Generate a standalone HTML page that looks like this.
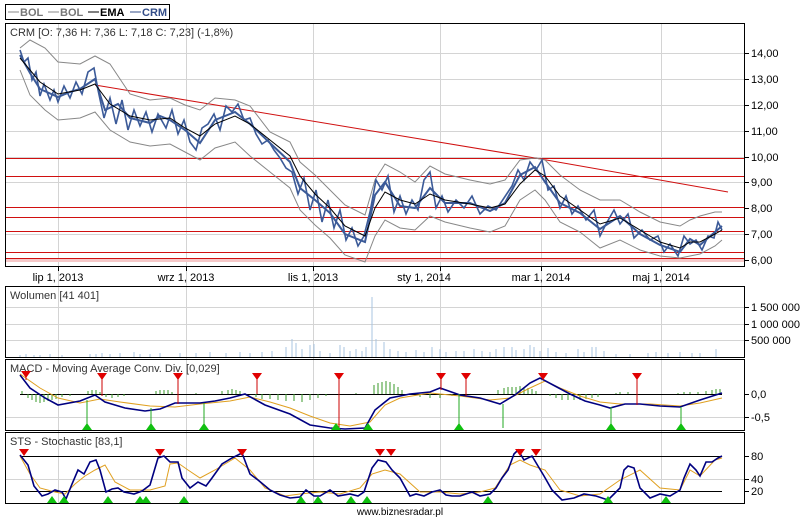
<!DOCTYPE html>
<html><head><meta charset="utf-8"><style>
html,body{margin:0;padding:0;background:#fff;width:800px;height:520px;overflow:hidden}
svg{display:block;font-family:"Liberation Sans",sans-serif}
</style></head><body>
<svg width="800" height="520" viewBox="0 0 800 520" xmlns="http://www.w3.org/2000/svg">
<rect x="5.5" y="4.5" width="164" height="15" fill="#fff" stroke="#000"/>
<g font-size="11" font-weight="bold">
<line x1="8" y1="12" x2="19" y2="12" stroke="#888"/><text x="20" y="16" fill="#777">BOL</text>
<line x1="48" y1="12" x2="59" y2="12" stroke="#888"/><text x="60" y="16" fill="#777">BOL</text>
<line x1="88" y1="12" x2="99" y2="12" stroke="#000"/><text x="100" y="16" fill="#000">EMA</text>
<line x1="130" y1="12" x2="141" y2="12" stroke="#334d88"/><text x="142" y="16" fill="#334d88">CRM</text>
</g>
<g stroke="#d4d4d4" stroke-width="1">
<line x1="58.5" y1="24" x2="58.5" y2="503"/><line x1="186.5" y1="24" x2="186.5" y2="503"/>
<line x1="313.5" y1="24" x2="313.5" y2="503"/><line x1="440.5" y1="24" x2="440.5" y2="503"/>
<line x1="541.5" y1="24" x2="541.5" y2="503"/><line x1="661.5" y1="24" x2="661.5" y2="503"/>
<line x1="6" y1="53.5" x2="744" y2="53.5"/><line x1="6" y1="79.5" x2="744" y2="79.5"/>
<line x1="6" y1="105.5" x2="744" y2="105.5"/><line x1="6" y1="131.5" x2="744" y2="131.5"/>
<line x1="6" y1="157.5" x2="744" y2="157.5"/><line x1="6" y1="182.5" x2="744" y2="182.5"/>
<line x1="6" y1="234.5" x2="744" y2="234.5"/>
<line x1="6" y1="307.5" x2="744" y2="307.5"/><line x1="6" y1="324.5" x2="744" y2="324.5"/><line x1="6" y1="340.5" x2="744" y2="340.5"/>
<line x1="6" y1="417.5" x2="744" y2="417.5"/><line x1="6" y1="479.5" x2="744" y2="479.5"/>
</g>
<g fill="none" stroke="#000">
<rect x="5.5" y="23.5" width="739" height="243"/>
<rect x="5.5" y="286.5" width="739" height="71"/>
<rect x="5.5" y="359.5" width="739" height="71"/>
<rect x="5.5" y="432.5" width="739" height="71"/>
</g>
<g font-size="11" fill="#000">
<g stroke="#000"><line x1="744" y1="53.5" x2="749" y2="53.5"/><line x1="744" y1="79.5" x2="749" y2="79.5"/><line x1="744" y1="105.5" x2="749" y2="105.5"/><line x1="744" y1="131.5" x2="749" y2="131.5"/><line x1="744" y1="157.5" x2="749" y2="157.5"/><line x1="744" y1="182.5" x2="749" y2="182.5"/><line x1="744" y1="208.5" x2="749" y2="208.5"/><line x1="744" y1="234.5" x2="749" y2="234.5"/><line x1="744" y1="260.5" x2="749" y2="260.5"/>
<line x1="744" y1="307.5" x2="749" y2="307.5"/><line x1="744" y1="324.5" x2="749" y2="324.5"/><line x1="744" y1="340.5" x2="749" y2="340.5"/>
<line x1="744" y1="394.5" x2="749" y2="394.5"/><line x1="744" y1="417.5" x2="749" y2="417.5"/>
<line x1="744" y1="456.5" x2="749" y2="456.5"/><line x1="744" y1="479.5" x2="749" y2="479.5"/><line x1="744" y1="491.5" x2="749" y2="491.5"/></g>
<text x="751" y="57">14,00</text><text x="751" y="83">13,00</text><text x="751" y="109">12,00</text><text x="751" y="135">11,00</text><text x="751" y="161">10,00</text><text x="751" y="186">9,00</text><text x="751" y="212">8,00</text><text x="751" y="238">7,00</text><text x="751" y="264">6,00</text>
<text x="751" y="311">1 500 000</text><text x="751" y="328">1 000 000</text><text x="751" y="344">500 000</text>
<text x="751" y="398">0,0</text><text x="751" y="421">-0,5</text>
<text x="751" y="460">80</text><text x="751" y="483">40</text><text x="751" y="495">20</text>
</g>
<g font-size="11" text-anchor="middle">
<g stroke="#000"><line x1="58.5" y1="266" x2="58.5" y2="271"/><line x1="186.5" y1="266" x2="186.5" y2="271"/><line x1="313.5" y1="266" x2="313.5" y2="271"/><line x1="440.5" y1="266" x2="440.5" y2="271"/><line x1="541.5" y1="266" x2="541.5" y2="271"/><line x1="661.5" y1="266" x2="661.5" y2="271"/></g>
<text x="58" y="281">lip 1, 2013</text><text x="186" y="281">wrz 1, 2013</text><text x="313" y="281">lis 1, 2013</text><text x="424" y="281">sty 1, 2014</text><text x="541" y="281">mar 1, 2014</text><text x="661" y="281">maj 1, 2014</text>
</g>
<g font-size="11" fill="#333">
<text x="10" y="36">CRM [O: 7,36  H: 7,36  L: 7,18  C: 7,23] (-1,8%)</text>
<text x="10" y="299">Wolumen [41 401]</text>
<text x="10" y="372">MACD - Moving Average Conv. Div. [0,029]</text>
<text x="10" y="445">STS - Stochastic [83,1]</text>
</g>
<rect x="6" y="259" width="738" height="3" fill="#f6c8c8"/>
<g stroke="#d01010" stroke-width="1">
<line x1="6" y1="158.5" x2="744" y2="158.5"/><line x1="6" y1="176.5" x2="744" y2="176.5"/>
<line x1="6" y1="207.5" x2="744" y2="207.5"/><line x1="6" y1="217.5" x2="744" y2="217.5"/>
<line x1="6" y1="231.5" x2="744" y2="231.5"/><line x1="6" y1="252.5" x2="744" y2="252.5"/>
<line x1="6" y1="258.5" x2="744" y2="258.5"/>
<line x1="95" y1="85" x2="535" y2="158"/><line x1="535" y1="158" x2="728" y2="192"/>
</g>
<g fill="none" stroke="#888" stroke-width="1">
<polyline points="20,48 30,40 45,48 58,62 80,64 95,56 110,64 130,94 150,100 170,98 185,105 200,110 215,98 235,100 250,106 270,132 290,142 300,162 315,175 330,190 345,205 365,215 375,180 385,164 400,172 415,182 430,166 445,174 470,180 490,184 505,180 520,160 535,158 545,160 560,175 580,190 600,200 620,200 640,212 660,222 680,226 690,220 700,216 715,212 722,212"/>
<polyline points="20,70 30,95 45,110 58,120 80,118 95,112 110,130 130,142 150,146 170,144 185,152 200,160 215,148 235,142 250,156 270,172 290,188 300,210 315,225 330,238 345,255 365,262 375,236 385,220 400,228 415,230 430,216 445,222 470,228 490,232 505,226 520,200 535,190 545,200 560,222 580,232 600,248 620,240 640,250 660,256 680,258 690,256 700,254 715,246 722,240"/>
</g>
<polyline fill="none" stroke="#3b5a98" stroke-width="2" points="20,55 30,73 40,89 58,97 70,92 80,89 95,79 105,110 118,104 130,118 150,123 160,116 170,120 185,130 200,143 215,120 235,112 250,124 270,143 290,162 300,188 315,200 330,213 345,234 365,242 375,195 385,182 400,206 415,208 430,188 445,203 470,203 490,211 505,203 520,175 535,167 545,182 560,203 580,213 600,229 620,216 640,234 660,245 680,252 690,239 700,245 715,232 722,226"/>
<polyline fill="none" stroke="#3b5a98" stroke-width="1.6" points="20,50 24,62 28,58 32,80 36,72 40,96 44,84 50,100 54,90 58,102 64,86 70,98 76,82 82,94 88,72 94,68 98,90 104,118 110,98 116,124 122,100 128,130 134,110 140,126 146,112 152,132 158,114 166,128 172,110 178,134 184,120 190,142 196,150 202,128 208,124 214,114 220,130 226,106 232,112 238,104 244,120 250,118 256,134 262,144 268,140 274,150 280,158 286,168 292,172 298,194 304,178 310,210 316,190 322,222 328,200 334,228 340,210 346,240 352,228 358,246 364,236 370,212 376,180 382,190 388,176 394,212 400,196 406,214 412,200 418,210 424,180 430,172 436,208 442,196 448,212 456,200 464,208 472,196 480,214 488,206 496,210 504,198 512,186 518,170 524,180 530,162 536,170 542,160 548,190 554,186 560,208 566,196 572,214 578,206 586,220 594,210 600,236 606,224 614,210 620,224 628,214 634,238 642,230 650,240 658,236 664,252 670,244 678,256 684,236 690,244 696,240 702,250 708,236 714,238 718,222 722,230"/>
<polyline fill="none" stroke="#000" stroke-width="1" points="20,58 40,82 58,94 80,90 95,84 110,104 130,116 150,120 170,118 185,128 200,136 215,124 235,116 250,124 270,140 290,156 300,176 315,194 330,208 345,226 365,236 375,208 385,192 400,200 415,204 430,194 445,200 470,204 490,208 505,204 520,184 535,170 545,176 560,196 580,210 600,224 620,218 640,230 660,242 680,248 690,242 700,242 715,234 722,230"/>
<path stroke="#a8c4e0" stroke-width="1" d="M20 357v-2M26 357v-3M34 357v-2M40 357v-2M50 357v-3M62 357v-2M90 357v-3M96 357v-3M102 357v-4M110 357v-3M120 357v-4M134 357v-5M140 357v-3M150 357v-3M160 357v-4M180 357v-4M196 357v-4M210 357v-5M226 357v-4M240 357v-5M250 357v-4M262 357v-5M272 357v-6M286 357v-10M292 357v-18M296 357v-14M302 357v-8M310 357v-12M314 357v-13M320 357v-6M330 357v-4M340 357v-12M344 357v-10M350 357v-6M356 357v-8M362 357v-6M366 357v-10M372 357v-60M376 357v-18M384 357v-15M390 357v-8M398 357v-6M406 357v-5M416 357v-7M424 357v-5M432 357v-10M440 357v-8M446 357v-5M456 357v-6M464 357v-6M474 357v-8M482 357v-6M490 357v-5M496 357v-8M504 357v-10M512 357v-10M516 357v-7M524 357v-8M530 357v-12M534 357v-10M540 357v-6M548 357v-9M556 357v-5M566 357v-4M578 357v-8M584 357v-5M592 357v-10M596 357v-10M604 357v-6M616 357v-3M630 357v-3M648 357v-4M656 357v-5M668 357v-4M680 357v-5M692 357v-4M700 357v-4M716 357v-8"/>
<line x1="20" y1="394.5" x2="722" y2="394.5" stroke="#000"/>
<path stroke="#3a9a2a" stroke-width="1" d="M22 394v-3M28 394v4M32 394v6M36 394v8M40 394v9M44 394v8M48 394v7M52 394v6M56 394v5M62 394v3M70 394v2M88 394v-3M92 394v-4M96 394v-4M100 394v-2M106 394v3M112 394v4M118 394v3M124 394v2M156 394v-3M160 394v-4M164 394v-4M168 394v-4M172 394v-2M196 394v-1M222 394v-3M228 394v-4M232 394v-5M236 394v-4M240 394v-3M256 394v3M262 394v5M270 394v5M278 394v6M286 394v7M294 394v7M302 394v8M310 394v6M318 394v4M326 394v2M356 394v-1M374 394v-9M378 394v-11M382 394v-12M386 394v-13M390 394v-12M394 394v-10M398 394v-7M402 394v-4M420 394v3M430 394v4M440 394v4M452 394v2M498 394v-4M504 394v-6M508 394v-7M512 394v-7M516 394v-7M520 394v-8M524 394v-7M528 394v-6M532 394v-5M536 394v-3M550 394v2M556 394v4M562 394v6M568 394v6M574 394v6M580 394v6M586 394v5M592 394v4M598 394v3M616 394v-1M620 394v-2M628 394v-2M678 394v-1M684 394v-2M690 394v-2M698 394v-2M706 394v-3M712 394v-4M716 394v-5M720 394v-5"/>
<polyline fill="none" stroke="#e0a020" stroke-width="1" points="20,374 40,388 58,398 80,403 100,399 120,402 150,406 175,407 200,404 230,401 250,397 270,402 290,408 310,416 330,423 350,426 370,422 385,405 400,398 430,393 460,396 490,400 510,398 530,388 545,381 560,388 580,396 600,402 620,404 650,404 680,406 700,403 722,398"/>
<polyline fill="none" stroke="#000080" stroke-width="1.6" points="20,375 30,388 45,398 58,405 80,401 95,395 105,402 125,408 145,411 160,409 175,403 200,403 215,401 230,398 245,394 265,405 290,414 310,425 330,428 345,429 365,428 375,410 390,398 410,394 430,392 440,388 460,395 480,398 500,404 515,395 530,383 540,378 555,386 570,394 585,401 600,405 610,408 625,404 640,404 660,406 680,407 700,400 722,393"/>
<g stroke-width="1">
<line x1="26" y1="377" x2="26" y2="380" stroke="#c00"/><line x1="102" y1="377" x2="102" y2="396" stroke="#c00"/><line x1="178" y1="377" x2="178" y2="404" stroke="#c00"/><line x1="257" y1="377" x2="257" y2="394" stroke="#c00"/><line x1="339" y1="377" x2="339" y2="428" stroke="#c00"/><line x1="441" y1="377" x2="441" y2="390" stroke="#c00"/><line x1="466" y1="377" x2="466" y2="396" stroke="#c00"/><line x1="543" y1="377" x2="543" y2="380" stroke="#c00"/><line x1="637" y1="377" x2="637" y2="405" stroke="#c00"/>
<line x1="87" y1="400" x2="87" y2="428" stroke="#2a2"/><line x1="151" y1="408" x2="151" y2="428" stroke="#2a2"/><line x1="204" y1="403" x2="204" y2="428" stroke="#2a2"/><line x1="459" y1="394" x2="459" y2="428" stroke="#2a2"/><line x1="503" y1="404" x2="503" y2="428" stroke="#2a2"/><line x1="611" y1="407" x2="611" y2="428" stroke="#2a2"/><line x1="681" y1="407" x2="681" y2="428" stroke="#2a2"/>
</g>
<g fill="#e00000"><path d="M21 371h10l-5 7z"/><path d="M97 373h10l-5 7z"/><path d="M173 373h10l-5 7z"/><path d="M252 373h10l-5 7z"/><path d="M334 373h10l-5 7z"/><path d="M436 373h10l-5 7z"/><path d="M461 373h10l-5 7z"/><path d="M538 373h10l-5 7z"/><path d="M632 373h10l-5 7z"/></g>
<g fill="#10c010"><path d="M82 430h10l-5-7z"/><path d="M146 430h10l-5-7z"/><path d="M199 430h10l-5-7z"/><path d="M331 430h10l-5-7z"/><path d="M363 430h10l-5-7z"/><path d="M454 430h10l-5-7z"/><path d="M606 430h10l-5-7z"/><path d="M676 430h10l-5-7z"/></g>
<line x1="20" y1="456.5" x2="722" y2="456.5" stroke="#000"/>
<line x1="20" y1="491.5" x2="722" y2="491.5" stroke="#000"/>
<polyline fill="none" stroke="#e0a020" stroke-width="1" points="20,456 30,474 40,488 55,492 65,494 75,484 85,476 95,470 105,465 115,482 130,490 150,490 165,486 170,464 178,463 188,470 200,478 215,470 235,458 250,470 265,488 285,496 300,494 320,492 340,494 360,488 372,474 385,470 400,474 420,492 440,492 460,494 480,492 495,488 510,465 520,460 530,465 545,470 560,490 580,496 600,494 620,480 640,470 660,488 680,490 690,470 700,476 715,460 722,458"/>
<polyline fill="none" stroke="#000080" stroke-width="1.6" points="20,455 28,465 34,486 42,496 48,494 55,490 62,492 66,499 72,484 78,470 84,474 90,462 96,460 100,470 106,492 112,489 118,488 124,492 134,494 142,491 150,485 158,458 164,456 170,462 178,462 182,478 190,488 198,482 206,486 212,478 222,464 232,458 242,453 250,474 258,480 270,490 280,495 290,498 300,497 306,490 314,496 320,496 330,490 338,496 350,494 358,496 364,492 372,468 378,460 386,462 392,470 400,478 410,496 416,494 424,496 432,492 440,490 446,495 452,496 460,496 472,492 480,496 490,494 496,488 502,478 508,470 514,454 518,450 524,460 532,456 538,466 544,476 552,490 562,500 574,498 584,494 596,496 608,500 614,494 620,488 624,470 628,466 634,468 640,488 650,498 660,494 670,496 680,490 684,478 690,464 696,470 700,476 706,462 712,462 718,458 722,456"/>
<g fill="#e00000"><path d="M19 449h10l-5 7z"/><path d="M155 449h10l-5 7z"/><path d="M237 449h10l-5 7z"/><path d="M375 449h10l-5 7z"/><path d="M386 449h10l-5 7z"/><path d="M515 449h10l-5 7z"/><path d="M531 449h10l-5 7z"/></g>
<g fill="#10c010"><path d="M47 503h10l-5-7z"/><path d="M59 503h10l-5-7z"/><path d="M103 503h10l-5-7z"/><path d="M135 503h10l-5-7z"/><path d="M141 503h10l-5-7z"/><path d="M179 503h10l-5-7z"/><path d="M296 503h10l-5-7z"/><path d="M313 503h10l-5-7z"/><path d="M346 503h10l-5-7z"/><path d="M362 503h10l-5-7z"/><path d="M483 503h10l-5-7z"/><path d="M603 503h10l-5-7z"/><path d="M661 503h10l-5-7z"/></g>
<text x="400" y="515" font-size="10" text-anchor="middle" fill="#000">www.biznesradar.pl</text>
</svg>
</body></html>
